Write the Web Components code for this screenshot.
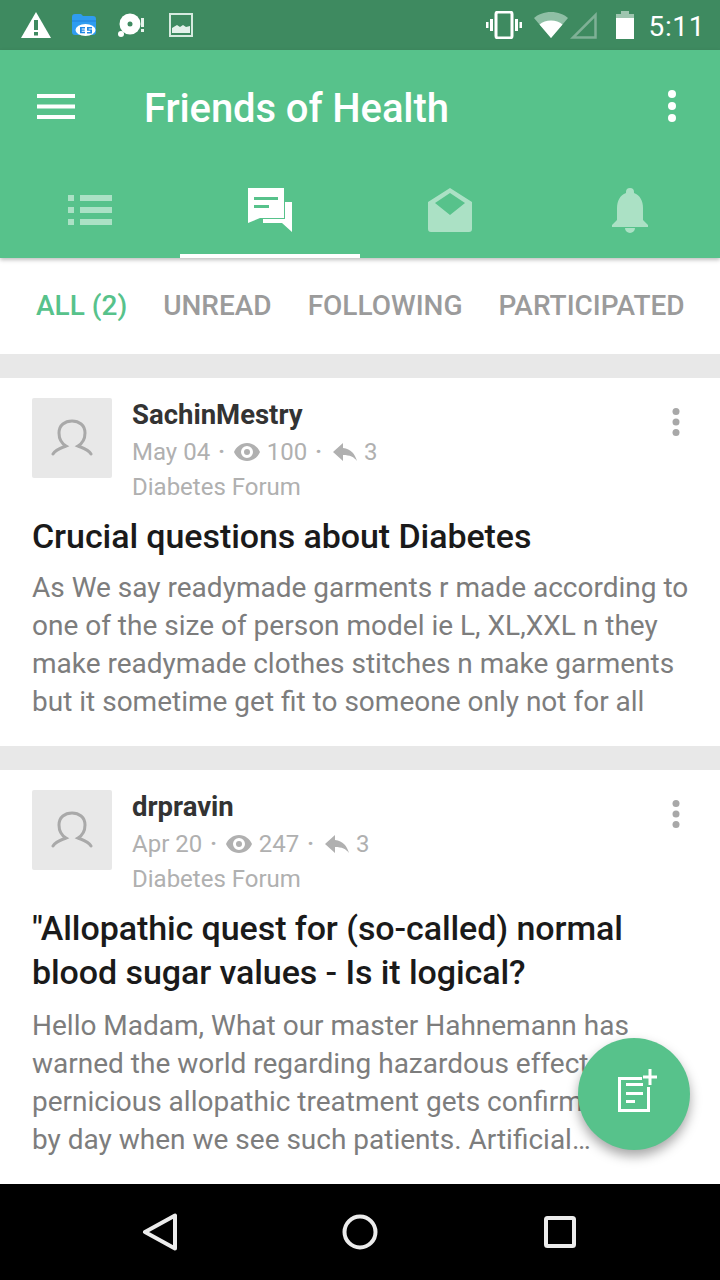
<!DOCTYPE html>
<html>
<head>
<meta charset="utf-8">
<title>Friends of Health</title>
<style>
html, body { margin: 0; padding: 0; }
body { width: 720px; height: 1280px; overflow: hidden; font-family: Roboto, "Liberation Sans", sans-serif; }
</style>
</head>
<body>
<app-shell>
    <status-bar></status-bar>
    <app-header></app-header>
    <filter-tabs></filter-tabs>
    <topic-card author="SachinMestry" date="May 04" views="100" replies="3" forum="Diabetes Forum" body-gap="11"
        heading="Crucial questions about Diabetes">
        As We say readymade garments r made according to<br>one of the size of person model ie L, XL,XXL n they<br>make readymade clothes stitches n make garments<br>but it sometime get fit to someone only not for all
    </topic-card>
    <topic-card author="drpravin" date="Apr 20" views="247" replies="3" forum="Diabetes Forum" body-gap="13"
        heading="&quot;Allopathic quest for (so-called) normal blood sugar values - Is it logical?">
        Hello Madam, What our master Hahnemann has<br>warned the world regarding hazardous effects of<br>pernicious allopathic treatment gets confirmed day<br>by day when we see such patients. Artificial…
    </topic-card>
    <fab-button slot="overlay"></fab-button>
    <nav-bar slot="nav"></nav-bar>
</app-shell>
<script>
class AppShell extends HTMLElement {
    constructor() {
        super();
        this.attachShadow({ mode: "open" });
        this.shadowRoot.innerHTML = `
            <style>
                :host { display: flex; flex-direction: column; position: relative; width: 720px; height: 1280px; background: #fff; overflow: hidden; }
                .content { flex: 1; min-height: 0; overflow: hidden; }
            </style>
            <div class="content"><slot></slot></div>
            <slot name="overlay"></slot>
            <slot name="nav"></slot>
        `;
    }
}

class StatusBar extends HTMLElement {
    constructor() {
        super();
        this.attachShadow({ mode: "open" });
        this.shadowRoot.innerHTML = `
            <style>
                :host { display: flex; align-items: center; height: 50px; background: #3e8a60; color: #fff; position: relative; }
                svg { display: block; flex: none; }
                .left { display: flex; align-items: center; margin-left: 20px; }
                .right { display: flex; align-items: center; margin-left: auto; }
                .time { font-size: 28px; letter-spacing: 0.6px; margin: 4px 15px 0 14px; line-height: 46px; }
            </style>
            <div class="left">
                <svg width="32" height="28" viewBox="0 0 32 28"><path fill="#fff" d="M16 1 31 27H1Z"/><rect x="14" y="9" width="4" height="10" fill="#3e8a60"/><rect x="14" y="21" width="4" height="3.5" fill="#3e8a60"/></svg>
                <svg style="margin-left:19px" width="26" height="26" viewBox="0 0 26 26"><path fill="#2f9cf0" d="M1 5q0-3 3-3h6l2 2h10q3 0 3 3v13q0 3-3 3H4q-3 0-3-3Z"/><path fill="#1976d2" d="M1 8h24v2H1z" opacity=".35"/><ellipse cx="14.5" cy="18" rx="10" ry="6" fill="#fff"/><path fill="#1e88e5" d="M9 15h5v1.4h-3.3v1h3v1.4h-3v1h3.3v1.400H9Zm7 0h5v1.400h-3.300v1h3.300v4h-5v-1.400h3.300v-1.200H16Z"/></svg>
                <svg style="margin-left:20px" width="32" height="28" viewBox="0 0 32 28"><circle cx="13" cy="13" r="10.500" fill="#fff"/><circle cx="13" cy="13" r="2.500" fill="#3e8a60"/><circle cx="4" cy="23" r="3" fill="#fff"/><rect x="24" y="7" width="3" height="9" fill="#e8f3ed"/><rect x="24" y="18" width="3" height="3" fill="#e8f3ed"/></svg>
                <svg style="margin-left:19px" width="26" height="26" viewBox="0 0 26 26"><rect x="2" y="2" width="22" height="22" fill="none" stroke="#d6eadf" stroke-width="2"/><path fill="#e4f1ea" d="M4 21v-5l5-3 3 2 3-2 3 2 4-1v7Z"/></svg>
            </div>
            <div class="right">
                <svg width="36" height="28" viewBox="0 0 36 28"><rect x="10" y="1" width="16" height="26" rx="2" fill="none" stroke="#fff" stroke-width="3"/><rect x="4" y="8" width="3" height="12" fill="#fff"/><rect x="29" y="8" width="3" height="12" fill="#fff"/><rect x="0" y="11" width="2.500" height="6" fill="#fff"/><rect x="33.500" y="11" width="2.500" height="6" fill="#fff"/></svg>
                <svg style="margin-left:11px" width="36" height="28" viewBox="0 0 36 28"><path fill="#8fbfa5" d="M18 1C11 1 5 3.500 1 7l17 20L35 7C31 3.500 25 1 18 1Z"/><path fill="#fff" d="M18 27 6.500 13.500C9.500 11 13.500 9.500 18 9.500s8.500 1.500 11.500 4Z"/></svg>
                <svg style="margin-left:1px" width="28" height="28" viewBox="0 0 28 28"><path fill="none" stroke="#7fb096" stroke-width="2.500" d="M25.500 4v22.500H3Z"/></svg>
                <svg style="margin-left:17px" width="20" height="30" viewBox="0 0 20 30"><path fill="#9ec5af" d="M6 1h8v3h5v6H1V4h5Z"/><rect x="1" y="8" width="18" height="21" fill="#fff"/></svg>
                <span class="time">5:11</span>
            </div>
        `;
    }
}

class AppHeader extends HTMLElement {
    constructor() {
        super();
        this.attachShadow({ mode: "open" });
        this.shadowRoot.innerHTML = `
            <style>
                :host { display: block; height: 208px; background: #57c28b; color: #fff; position: relative; box-shadow: 0 2px 4px rgba(0,0,0,.25); }
                .bar { display: flex; align-items: center; height: 112px; }
                .menu { margin-left: 37px; display: block; }
                h1 { margin: 5px 0 0 69px; font-size: 40px; font-weight: 500; line-height: 100px; letter-spacing: -0.1px; }
                .more { margin-left: auto; margin-right: 44px; display: block; }
                .tabs { display: grid; grid-template-columns: repeat(4, 180px); height: 96px; }
                .tab { display: flex; justify-content: center; padding-top: 25px; box-sizing: border-box; height: 96px; color: rgba(255,255,255,.5); }
                .tab.on { color: #fff; border-bottom: 4px solid #fff; }
                svg { display: block; }
            </style>
            <div class="bar">
                <svg class="menu" width="38" height="28" viewBox="0 0 38 28"><path fill="#fff" d="M0 2h38v4H0zM0 12.500h38v4H0zM0 23h38v4H0z"/></svg>
                <h1>Friends of Health</h1>
                <svg class="more" width="8" height="32" viewBox="0 0 8 32"><circle cx="4" cy="4" r="4" fill="#fff"/><circle cx="4" cy="16" r="4" fill="#fff"/><circle cx="4" cy="28" r="4" fill="#fff"/></svg>
            </div>
            <div class="tabs">
                <div class="tab"><svg width="46" height="46" viewBox="0 0 46 46"><path fill="currentColor" d="M1 8h6v6H1zM13 8h32v6H13zM1 20h6v6H1zM13 20h32v6H13zM1 32h6v6H1zM13 32h32v6H13z"/></svg></div>
                <div class="tab on"><svg width="46" height="46" viewBox="0 0 46 46"><path fill="currentColor" fill-rule="evenodd" d="M1 1h36v30H13L1 36V1Zm6 9v3h24v-3H7Zm0 8v3h15v-3H7Z"/><path fill="currentColor" d="M38 15h7v30l-10-9H16v-4h22Z"/></svg></div>
                <div class="tab"><svg width="46" height="46" viewBox="0 0 46 46"><path fill="currentColor" fill-rule="evenodd" d="M23 1 45 15v27q0 3-3 3H4q-3 0-3-3V15Zm0 5L8 16l15 12 15-12Z"/></svg></div>
                <div class="tab"><svg width="38" height="46" viewBox="0 0 38 46"><path fill="currentColor" d="M19 1a4 4 0 0 1 4 4v1c6 2 9 8 9 15v12l5 5v2H1v-2l5-5V21c0-7 3-13 9-15V5a4 4 0 0 1 4-4ZM14 41h10a5 5 0 0 1-10 0Z"/></svg></div>
            </div>
        `;
    }
}

class FilterTabs extends HTMLElement {
    constructor() {
        super();
        this.attachShadow({ mode: "open" });
        this.shadowRoot.innerHTML = `
            <style>
                :host { display: flex; gap: 36px; height: 96px; padding: 0 36px 2px; align-items: center; box-sizing: border-box; background: #fff; font-size: 28px; font-weight: 500; color: #9b9b9b; white-space: nowrap; }
                .on { color: #57c28b; }
            </style>
            <span class="on">ALL (2)</span><span>UNREAD</span><span>FOLLOWING</span><span>PARTICIPATED</span>
        `;
    }
}

class TopicCard extends HTMLElement {
    constructor() {
        super();
        this.attachShadow({ mode: "open" });
        const a = (n) => this.getAttribute(n);
        this.shadowRoot.innerHTML = `
            <style>
                :host { display: block; border-top: 24px solid #e8e8e8; background: #fff; padding: 20px 32px 0; position: relative; }
                .head { display: flex; gap: 20px; }
                .avatar { width: 80px; height: 80px; background: #e8e8e8; border-radius: 2px; display: flex; align-items: center; justify-content: center; flex: none; }
                .name { font-size: 27.5px; font-weight: 700; color: #333; line-height: 32px; margin-top: 1px; }
                .meta { display: flex; align-items: center; font-size: 24px; color: #b0b0b0; line-height: 36px; margin-top: 3px; }
                .meta svg { display: block; }
                .dot { margin: 0 9px 0 8px; font-size: 22px; font-weight: 700; }
                .forum { font-size: 24px; color: #b0b0b0; line-height: 34px; }
                .more { position: absolute; right: 40px; top: 30px; display: block; }
                h2 { margin: 10px 0 0; font-size: 34px; font-weight: 500; color: #1a1a1a; line-height: 44px; letter-spacing: -0.08px; }
                .body { margin-top: ${a("body-gap")}px; font-size: 28px; color: #7d7d7d; line-height: 38px; padding-bottom: 25px; white-space: nowrap; }
            </style>
            <div class="head">
                <div class="avatar">
                    <svg width="42" height="38" viewBox="0 0 42 38"><path fill="none" stroke="#a9a9a9" stroke-width="3" stroke-linecap="round" d="M2 35C5 30 10 29 15 27 10 24 8 19 8 14 8 6 14 2 21 2 28 2 34 6 34 14 34 19 32 24 27 27 32 29 37 30 40 35"/></svg>
                </div>
                <div>
                    <div class="name">${a("author")}</div>
                    <div class="meta">
                        <span>${a("date")}</span><span class="dot">·</span>
                        <svg width="26" height="18" viewBox="0 0 26 18" style="margin-right:7px"><path fill="#b0b0b0" fill-rule="evenodd" d="M13 0c6 0 11 4 13 9-2 5-7 9-13 9S2 14 0 9c2-5 7-9 13-9Zm0 3a6 6 0 1 0 0 12 6 6 0 0 0 0-12Zm0 3a3 3 0 1 1 0 6 3 3 0 0 1 0-6Z"/></svg>
                        <span>${a("views")}</span><span class="dot">·</span>
                        <svg width="24" height="18" viewBox="0 0 24 18" style="margin:0 7px 0 2px"><path fill="#b0b0b0" d="M10 0v5c8 1 12 6 14 13-3-4-7-6-14-6v6L0 9Z"/></svg>
                        <span>${a("replies")}</span>
                    </div>
                    <div class="forum">${a("forum")}</div>
                </div>
            </div>
            <svg class="more" width="8" height="28" viewBox="0 0 8 28"><circle cx="4" cy="3.500" r="3.500" fill="#a8a8a8"/><circle cx="4" cy="14" r="3.500" fill="#a8a8a8"/><circle cx="4" cy="24.500" r="3.500" fill="#a8a8a8"/></svg>
            <h2>${a("heading")}</h2>
            <div class="body"><slot></slot></div>
        `;
    }
}

class FabButton extends HTMLElement {
    constructor() {
        super();
        this.attachShadow({ mode: "open" });
        this.shadowRoot.innerHTML = `
            <style>
                :host { position: absolute; left: 578px; top: 1038px; width: 112px; height: 112px; border-radius: 50%; background: #57c28b; box-shadow: 0 6px 12px rgba(0,0,0,.35); display: flex; align-items: center; justify-content: center; }
                svg { display: block; margin: 0 0 6px 8px; }
            </style>
            <svg width="40" height="44" viewBox="0 0 40 44"><path fill="none" stroke="#fff" stroke-width="3" d="M24 9.500H1.500V41.500H30.500V18"/><path fill="#fff" d="M8 14h17v3H8zM8 23h17v3H8zM8 31h9v3H8zM30.500 0h3v6.500H39v3h-5.500V16h-3V9.500H25v-3h5.500Z"/></svg>
        `;
    }
}

class NavBar extends HTMLElement {
    constructor() {
        super();
        this.attachShadow({ mode: "open" });
        this.shadowRoot.innerHTML = `
            <style>
                :host { display: grid; grid-template-columns: repeat(3, 200px); justify-content: center; height: 96px; background: #000; align-items: center; justify-items: center; flex: none; }
                svg { display: block; }
            </style>
            <svg width="36" height="38" viewBox="0 0 36 38"><path fill="none" stroke="#ececec" stroke-width="4" stroke-linejoin="round" d="M33 2.500V35.500L3 19Z"/></svg>
            <svg width="36" height="36" viewBox="0 0 36 36"><circle cx="18" cy="18" r="15.500" fill="none" stroke="#ececec" stroke-width="4"/></svg>
            <svg width="32" height="32" viewBox="0 0 32 32"><rect x="2" y="2" width="28" height="28" rx="1.500" fill="none" stroke="#ececec" stroke-width="4"/></svg>
        `;
    }
}

customElements.define("app-shell", AppShell);
customElements.define("status-bar", StatusBar);
customElements.define("app-header", AppHeader);
customElements.define("filter-tabs", FilterTabs);
customElements.define("topic-card", TopicCard);
customElements.define("fab-button", FabButton);
customElements.define("nav-bar", NavBar);
</script>
</body>
</html>
